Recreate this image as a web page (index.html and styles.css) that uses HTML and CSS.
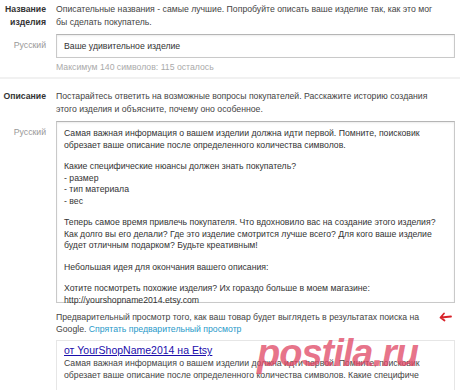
FILE: index.html
```html
<!DOCTYPE html>
<html lang="ru">
<head>
<meta charset="utf-8">
<link rel="stylesheet" href="styles.css">
</head>
<body>
<div class="page">
  <section class="section first">
    <div class="row">
      <div class="label bold">Название изделия</div>
      <div class="hint">Описательные названия - самые лучшие. Попробуйте описать ваше изделие так, как это мог бы сделать покупатель.</div>
    </div>
    <div class="row field-row">
      <div class="label lang">Русский</div>
      <div class="input">Ваше удивительное изделие</div>
    </div>
    <div class="row">
      <div class="label"></div>
      <div class="counter">Максимум 140 символов: 115 осталось</div>
    </div>
  </section>
  <section class="section second">
    <div class="row">
      <div class="label bold">Описание</div>
      <div class="hint">Постарайтесь ответить на возможные вопросы покупателей. Расскажите историю создания этого изделия и объясните, почему оно особенное.</div>
    </div>
    <div class="row field-row">
      <div class="label lang">Русский</div>
      <div class="textarea">
        <p>Самая важная информация о вашем изделии должна идти первой. Помните, поисковик обрезает ваше описание после определенного количества символов.</p>
        <p>Какие специфические нюансы должен знать покупатель?<br>- размер<br>- тип материала<br>- вес</p>
        <p>Теперь самое время привлечь покупателя. Что вдохновило вас на создание этого изделия? Как долго вы его делали? Где это изделие смотрится лучше всего? Для кого ваше изделие будет отличным подарком? Будьте креативным!</p>
        <p>Небольшая идея для окончания вашего описания:</p>
        <p>Хотите посмотреть похожие изделия? Их гораздо больше в моем магазине:<br>http://yourshopname2014.etsy.com</p>
      </div>
    </div>
    <div class="row">
      <div class="label"></div>
      <div class="preview-note">Предварительный просмотр того, как ваш товар будет выглядеть в результатах поиска на Google. <a class="link">Спрятать предварительный просмотр</a>
        <svg class="arrow" width="14" height="10" viewBox="0 0 14 10"><path d="M13 4.5 L3 5.5 M6 1.5 L2.5 5.5 L6.5 8.5" fill="none" stroke="#d8232a" stroke-width="1.8" stroke-linecap="round" stroke-linejoin="round"/></svg>
      </div>
    </div>
    <div class="row">
      <div class="label"></div>
      <div class="preview">
        <a class="ptitle">от YourShopName2014 на Etsy</a>
        <div class="ptext">Самая важная информация о вашем изделии должна идти первой. Помните, поисковик обрезает ваше описание после определенного количества символов. Какие специфиче</div>
      </div>
    </div>
  </section>
  <div class="watermark">postila.ru</div>
</div>
</body>
</html>
```
FILE: styles.css
```css
* { box-sizing: border-box; }
html, body { margin: 0; padding: 0; background: #fff; }
body {
  font-family: "Liberation Sans", Arial, sans-serif;
  font-size: 8.7px;
  color: #444;
  width: 460px;
  height: 390px;
  overflow: hidden;
}
.page { position: relative; }
.section { padding: 0 5px 0 0; }
.section.first { padding-top: 3px; padding-bottom: 4px; border-bottom: 2px solid #f1f1f1; }
.section.second { padding-top: 11px; }
.row {
  display: grid;
  grid-template-columns: 46px 1fr;
  column-gap: 10px;
}
.label { text-align: right; line-height: 13px; }
.bold { font-weight: bold; color: #333; }
.lang { color: #999; }
.hint { line-height: 13px; color: #444; padding-right: 10px; }
.field-row { margin-top: 5px; }
.field-row .lang { padding-top: 5px; }
.input {
  border: 1px solid #c9c9c9;
  border-top-color: #b5b5b5;
  height: 24px;
  line-height: 22px;
  padding-left: 7px;
  color: #333;
  box-shadow: inset 0 1px 2px rgba(0,0,0,0.08);
}
.counter { color: #aaa; margin-top: 3px; line-height: 12px; }
.textarea {
  border: 1px solid #c9c9c9;
  border-top-color: #b5b5b5;
  box-shadow: inset 0 1px 2px rgba(0,0,0,0.08);
  padding: 6px 8px 4px 7px;
  line-height: 11.5px;
  color: #333;
  height: 182px;
}
.textarea p { margin: 0 0 10px; }
.textarea p:last-child { margin: 0; }
.preview-note { position: relative; line-height: 12px; margin-top: 8px; padding-right: 18px; color: #444; }
.link { color: #2899c9; }
.arrow { position: absolute; right: 3px; top: 1px; }
.preview {
  margin-top: 5px;
  border: 1px solid #e6e6e6;
  border-bottom: none;
  padding: 2px 8px 10px 7px;
  height: 60px;
}
.ptitle { display: block; font-size: 10.5px; color: #1a0dab; text-decoration: underline; line-height: 14px; }
.ptext { line-height: 12px; color: #444; }
.watermark {
  position: absolute;
  left: 257px;
  top: 332px;
  font-family: "Liberation Sans", Arial, sans-serif;
  font-size: 38px;
  font-weight: bold;
  font-style: italic;
  color: rgba(224, 70, 100, 0.75);
  letter-spacing: -1px;
  pointer-events: none;
}
```
